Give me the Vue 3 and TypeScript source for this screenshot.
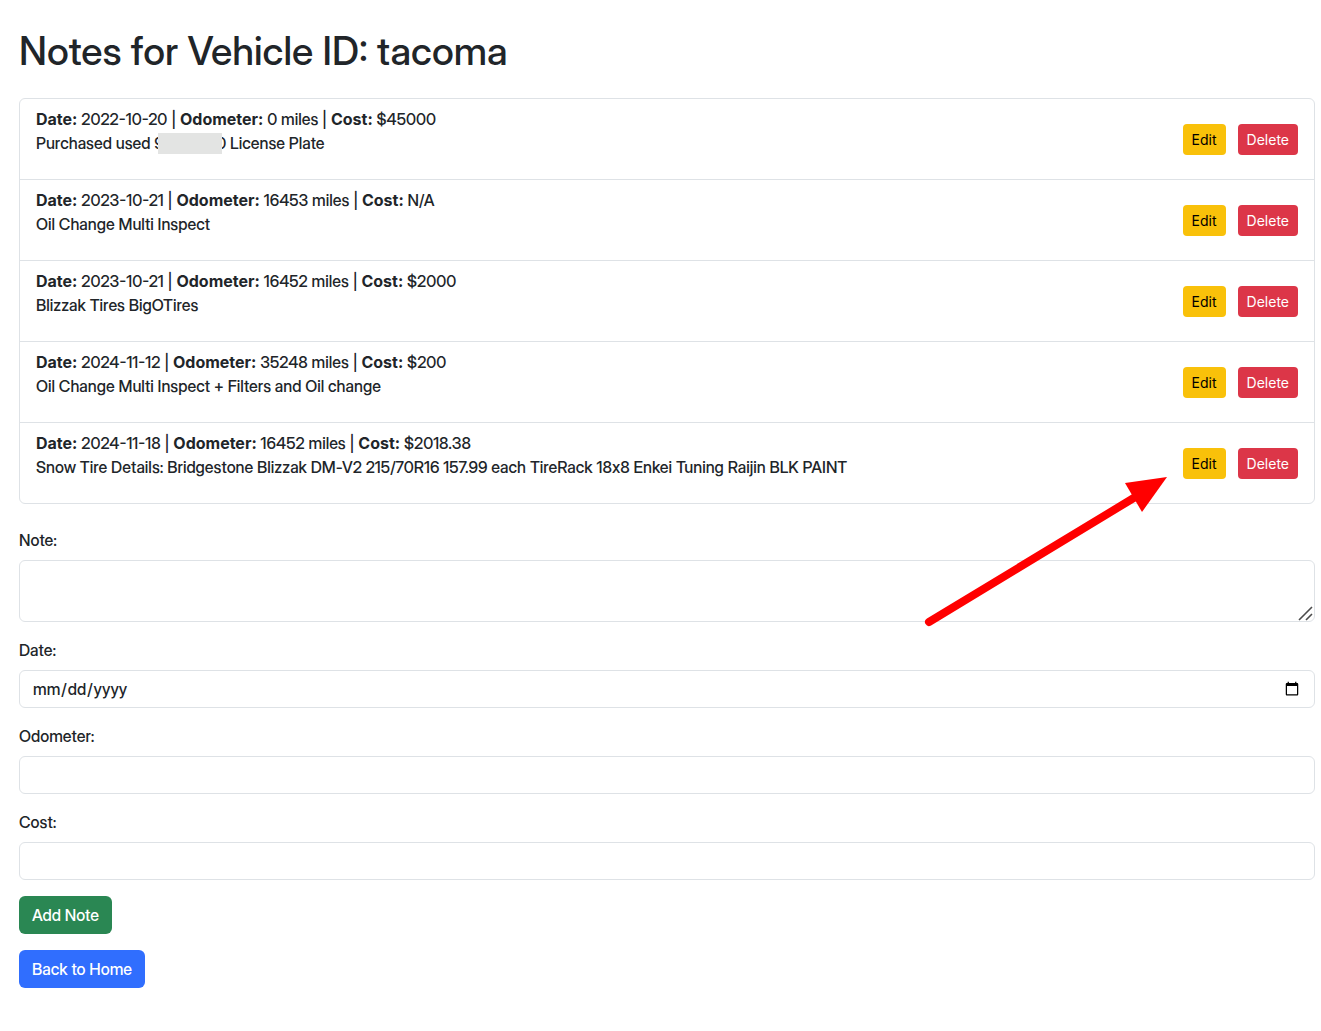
<script setup lang="ts">
import { ref } from 'vue'

interface VehicleNote {
  date: string
  odometer: number
  cost: string
  text: string
  plate?: { first: string; last: string; rest: string }
}

const notes: VehicleNote[] = [
  { date: '2022-10-20', odometer: 0, cost: '$45000', text: 'Purchased used ', plate: { first: '9', last: '0', rest: ' License Plate' } },
  { date: '2023-10-21', odometer: 16453, cost: 'N/A', text: 'Oil Change Multi Inspect' },
  { date: '2023-10-21', odometer: 16452, cost: '$2000', text: 'Blizzak Tires BigOTires' },
  { date: '2024-11-12', odometer: 35248, cost: '$200', text: 'Oil Change Multi Inspect + Filters and Oil change' },
  { date: '2024-11-18', odometer: 16452, cost: '$2018.38', text: 'Snow Tire Details: Bridgestone Blizzak DM-V2 215/70R16 157.99 each TireRack 18x8 Enkei Tuning Raijin BLK PAINT' },
]

const note = ref('')
const date = ref('')
const odometer = ref('')
const cost = ref('')
</script>

<template>
  <main class="page">
    <h1>Notes for Vehicle ID: tacoma</h1>
    <div class="list-wrap">
      <ul class="list">
        <li v-for="(n, i) in notes" :key="i" class="item">
          <div>
            <div><strong>Date:</strong> {{ n.date }} | <strong>Odometer:</strong> {{ n.odometer }} miles | <strong>Cost:</strong> {{ n.cost }}</div>
            <p>{{ n.text }}<template v-if="n.plate"><span class="plate"><span>{{ n.plate.first }}</span><span>{{ n.plate.last }}</span></span>{{ n.plate.rest }}</template></p>
          </div>
          <div class="actions">
            <button type="button" class="btn small edit">Edit</button>
            <button type="button" class="btn small delete">Delete</button>
          </div>
        </li>
      </ul>
      <svg class="arrow" width="244" height="152" viewBox="0 0 244 152" aria-hidden="true">
        <path d="M6 147L214 21" stroke="#f00" stroke-width="8" stroke-linecap="round" />
        <path d="M244 2L202 8L219 37Z" fill="#f00" />
      </svg>
    </div>
    <form @submit.prevent>
      <div class="field">
        <label for="note">Note:</label>
        <div class="area">
          <textarea id="note" v-model="note" class="control" rows="2"></textarea>
          <svg class="grip" width="15" height="15" viewBox="0 0 15 15" aria-hidden="true">
            <path d="M1 14L14 1M8 14L14 8" fill="none" stroke="#4c4c4c" stroke-width="1.6" />
          </svg>
        </div>
      </div>
      <div class="field">
        <label for="date">Date:</label>
        <input id="date" v-model="date" class="control" type="date">
      </div>
      <div class="field">
        <label for="odometer">Odometer:</label>
        <input id="odometer" v-model="odometer" class="control" type="text">
      </div>
      <div class="field">
        <label for="cost">Cost:</label>
        <input id="cost" v-model="cost" class="control" type="text">
      </div>
      <button type="submit" class="btn add">Add Note</button>
    </form>
    <a href="#" class="btn home">Back to Home</a>
  </main>
</template>

<style>
body {
  background: #fff;
}
</style>

<style scoped>
.page,
.page * {
  box-sizing: border-box;
}
.page {
  padding: 27px 6px 43px 19px;
  font: 450 16px/24px "Inter Display", Inter, "Liberation Sans", sans-serif;
  color: #212529;
}
h1 {
  margin: 0 0 23px;
  font-size: 39px;
  font-weight: 500;
  line-height: 48px;
}
.list-wrap {
  position: relative;
  z-index: 1;
  margin-bottom: 24px;
}
.list {
  margin: 0;
  padding: 0;
  list-style: none;
  border: 1px solid #dee2e6;
  border-radius: 6px;
}
.item {
  display: flex;
  justify-content: space-between;
  align-items: center;
  padding: 8px 16px;
}
.item + .item {
  border-top: 1px solid #dee2e6;
}
.item p {
  margin: 0 0 16px;
  font-variant-ligatures: no-contextual;
}
strong {
  font-family: Inter, sans-serif;
  font-weight: 700;
}
.plate {
  display: inline-flex;
  justify-content: space-between;
  position: relative;
  width: 72px;
  height: 24px;
  vertical-align: top;
}
.plate::after {
  content: "";
  position: absolute;
  inset: 2px 4px 1px;
  background: #e3e4e3;
}
.actions {
  display: flex;
  gap: 12px;
}
.btn {
  display: inline-block;
  padding: 6px 12px;
  border: 1px solid transparent;
  border-radius: 6px;
  font: inherit;
  font-weight: 500;
  color: #fff;
  text-decoration: none;
  cursor: pointer;
}
.small {
  padding: 4px 8px;
  border-radius: 4px;
  font-family: Inter, sans-serif;
  font-size: 14px;
  font-weight: 400;
  line-height: 21px;
}
.edit {
  background: #f9c10a;
  color: #000;
}
.delete {
  background: #dc3648;
}
.add {
  background: #2a8753;
}
.home {
  margin-top: 16px;
  background: #306efe;
}
.field {
  margin-bottom: 16px;
}
label {
  display: block;
  margin-bottom: 8px;
}
.control {
  display: block;
  width: 100%;
  height: 38px;
  padding: 6px 12px;
  border: 1px solid #dee2e6;
  border-radius: 6px;
  background: #fff;
  font: inherit;
  color: inherit;
}
.area {
  position: relative;
}
textarea.control {
  height: 62px;
  resize: vertical;
}
textarea::-webkit-resizer {
  display: none;
}
.grip {
  position: absolute;
  right: 2px;
  bottom: 1px;
  pointer-events: none;
}
.arrow {
  position: absolute;
  right: 148px;
  bottom: -123px;
  pointer-events: none;
}
</style>
